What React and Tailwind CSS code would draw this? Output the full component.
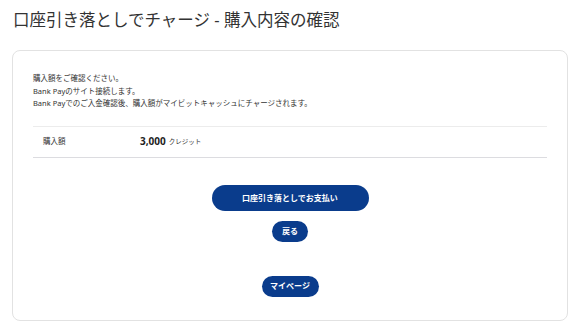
import React from 'react';

const font = { fontFamily: '"Noto Sans", "Noto Sans CJK JP", sans-serif' };

const PillButton = ({ children, className = '' }) => (
  <button
    className={`rounded-full bg-[#0a3c8c] text-white font-bold text-[8px] leading-none flex items-center justify-center ${className}`}
  >
    {children}
  </button>
);

const App = () => {
  return (
    <div className="w-[580px] h-[330px] bg-white text-[#333]" style={font}>
      <h1 className="pl-[13px] pt-[8px] text-[16.5px] leading-[24px] font-normal text-[#333]">
        口座引き落としでチャージ - 購入内容の確認
      </h1>
      <div className="mx-[12px] mt-[18px] h-[271px] rounded-[8px] border border-[#e2e2e2] px-[20px] pt-[21px]">
        <div className="text-[7.5px] leading-[12.5px] text-[#333]">
          <p>購入額をご確認ください。</p>
          <p>Bank Payのサイト接続します。</p>
          <p>Bank Payでのご入金確認後、購入額がマイビットキャッシュにチャージされます。</p>
        </div>
        <div className="mt-[16px] h-[32px] border-t border-b border-t-[#ececec] border-b-[#dcdce0] flex items-center">
          <span className="w-[107px] pl-[10px] text-[7.5px] text-[#333]">購入額</span>
          <span className="text-[10px] font-bold text-[#222]">3,000</span>
          <span className="ml-[3px] text-[6.5px] text-[#333]">クレジット</span>
        </div>
        <div className="flex flex-col items-center">
          <PillButton className="mt-[27px] w-[157px] h-[26px]">口座引き落としでお支払い</PillButton>
          <PillButton className="mt-[10px] w-[36px] h-[21px]">戻る</PillButton>
          <PillButton className="mt-[34px] w-[57px] h-[21px]">マイページ</PillButton>
        </div>
      </div>
    </div>
  );
};

export default App;
